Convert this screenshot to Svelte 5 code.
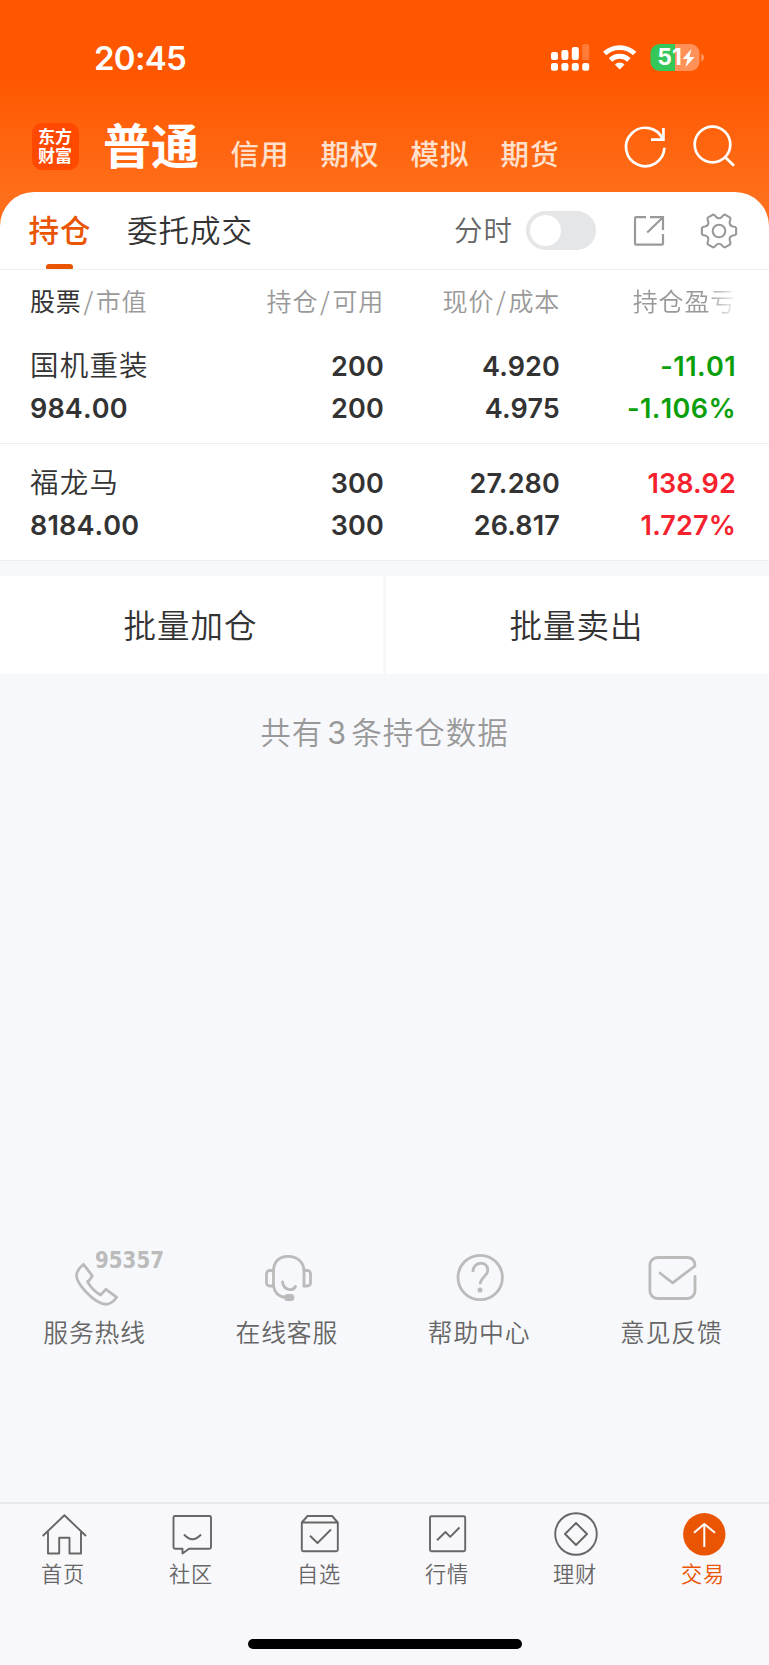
<script>
  const accounts = ['信用', '期权', '模拟', '期货']

  const columns = [
    ['持仓', '可用'],
    ['现价', '成本'],
  ]

  const holdings = [
    { name: '国机重装', value: '984.00', amount: '200', usable: '200', price: '4.920', cost: '4.975', profit: '-11.01', rate: '-1.106%', trend: 'down' },
    { name: '福龙马', value: '8184.00', amount: '300', usable: '300', price: '27.280', cost: '26.817', profit: '138.92', rate: '1.727%', trend: 'up' },
  ]

  const services = [
    { id: 'phone', label: '服务热线' },
    { id: 'headset', label: '在线客服' },
    { id: 'help', label: '帮助中心' },
    { id: 'mail', label: '意见反馈' },
  ]

  const tabs = [
    { id: 'home', label: '首页' },
    { id: 'chat', label: '社区' },
    { id: 'pick', label: '自选' },
    { id: 'chart', label: '行情' },
    { id: 'money', label: '理财' },
    { id: 'trade', label: '交易' },
  ]

  let active = $state('trade')
  let minute = $state(false)

  // six teeth, each with two rounded corners and a shallow valley between
  const point = (deg, r) => {
    const a = (deg * Math.PI) / 180
    return `${(20 + r * Math.cos(a)).toFixed(2)} ${(20 + r * Math.sin(a)).toFixed(2)}`
  }
  const gear =
    [0, 60, 120, 180, 240, 300]
      .map((d, i) => `${i ? 'L' : 'M'}${point(d - 10, 17.4)}L${point(d + 10, 17.4)}Q${point(d + 15, 17)} ${point(d + 18, 14.6)}Q${point(d + 30, 11.2)} ${point(d + 42, 14.6)}Q${point(d + 45, 17)} ${point(d + 50, 17.4)}`)
      .join('') + 'z'
</script>

<div class="screen">
  <header>
    <div class="status">
      <span class="time">20:45</span>
      <svg class="status-icons" width="156" height="32" viewBox="549 42 156 32" fill="#fff">
        <rect x="551" y="63" width="7" height="7.7" rx="2.2" />
        <rect x="561.4" y="63" width="7" height="7.7" rx="2.2" />
        <rect x="571.8" y="63" width="7" height="7.7" rx="2.2" />
        <rect x="582.2" y="63" width="7" height="7.7" rx="2.2" />
        <rect x="551" y="52" width="7" height="8" rx="2.2" />
        <rect x="561.4" y="50" width="7" height="10" rx="2.2" />
        <rect x="571.8" y="47" width="7" height="13" rx="2.2" />
        <rect x="582.2" y="44" width="7" height="16" rx="2.2" opacity=".22" />
        <g fill="none" stroke="#fff" stroke-width="4.8">
          <path d="M604.7 53.6a21.6 21.6 0 0 1 30 0" />
          <path d="M610.5 60a13.2 13.2 0 0 1 18.4 0" />
        </g>
        <path d="M614.8 64.4a7.2 7.2 0 0 1 9.8 0l-4.9 5z" />
        <path d="M659.5 44h15.5v27h-15.5a9 9 0 0 1-9-9v-9a9 9 0 0 1 9-9z" fill="#34c759" />
        <path d="M675 44h15.5a9 9 0 0 1 9 9v9a9 9 0 0 1-9 9H675z" opacity=".35" />
        <path d="M701.3 53.5q2.7 1.2 2.7 4t-2.7 4z" opacity=".4" />
        <text x="657.3" y="65.3" textLength="24.5" lengthAdjust="spacingAndGlyphs">51</text>
        <path d="M691.4 49L682.6 59h4.8l-2 8.300L694.500 57h-5z" />
      </svg>
    </div>
    <div class="nav">
      <div class="logo"><span>东方</span><span>财富</span></div>
      <h1>普通</h1>
      <nav class="accounts">
        {#each accounts as account}
          <span>{account}</span>
        {/each}
      </nav>
      <svg class="refresh" width="44" height="44" viewBox="0 0 44 44" fill="none" stroke="#fff" stroke-width="2.7">
        <path d="M41.4 22.8A19.2 19.2 0 1 1 39.8 14.3" />
        <path d="M40.4 3v11.7H28" />
      </svg>
      <svg class="search" width="44" height="44" viewBox="0 0 44 44" fill="none" stroke="#fff" stroke-width="2.7">
        <circle cx="20.5" cy="19.5" r="17.8" />
        <path d="M33 32l9 8.7" />
      </svg>
    </div>
  </header>

  <main>
    <div class="tools">
      <span class="tool current">持仓</span>
      <span class="tool">委托成交</span>
      <span class="minute">分时</span>
      <button class="switch" class:on={minute} aria-label="分时" onclick={() => (minute = !minute)}><i></i></button>
      <svg class="export" width="36" height="36" viewBox="0 0 36 36" fill="none" stroke="#999" stroke-width="2.2">
        <path d="M15 4.2H5.2a1.2 1.2 0 0 0-1.2 1.2v25a1.2 1.2 0 0 0 1.2 1.2h25.6a1.2 1.2 0 0 0 1.2-1.2V21" />
        <path d="M19 4.2h13V17M31.5 4.7L16.2 19.5" />
      </svg>
      <svg class="gear" width="40" height="40" viewBox="0 0 40 40" fill="none" stroke="#999" stroke-width="2.1" stroke-linejoin="round">
        <path d={gear} />
        <circle cx="20" cy="20" r="6.3" />
      </svg>
    </div>

    <div class="row head">
      <div><b>股票</b><i>/</i>市值</div>
      {#each columns as [first, second]}
        <div>{first}<i>/</i>{second}</div>
      {/each}
      <div><span class="fade">持仓盈亏</span></div>
    </div>
    {#each holdings as item (item.name)}
      <div class="row stock">
        <div class="wide"><p class="name">{item.name}</p><p>{item.value}</p></div>
        <div><p>{item.amount}</p><p>{item.usable}</p></div>
        <div><p>{item.price}</p><p>{item.cost}</p></div>
        <div class={item.trend}><p>{item.profit}</p><p>{item.rate}</p></div>
      </div>
    {/each}
  </main>

  <div class="batch">
    <button>批量加仓</button>
    <button>批量卖出</button>
  </div>
  <p class="count">共有<span>3</span>条持仓数据</p>

  <div class="services">
    {#each services as item (item.id)}
      <div class="service">
        <svg width="150" height="60" viewBox="0 0 150 60" fill="none" stroke="#bbb" stroke-width="2.8" stroke-linecap="round" stroke-linejoin="round">
          {#if item.id === 'phone'}
            <path d="M62.5 15.3L71.3 26.8Q68.5 31.8 66.5 32.6Q71 41 79.5 46Q82 43.5 85 40.3L95.7 48.3Q91.5 54.5 85.5 55.3C73 55 53.5 33 55.8 24.5Q57 20 62.5 15.3z" />
            <text class="hotline" x="74" y="18.6" textLength="69" lengthAdjust="spacingAndGlyphs">95357</text>
          {:else if item.id === 'headset'}
            <path d="M60.5 37V22.5C60.5 13 66 7.3 75 7.3S91 13 91 22.5V37" />
            <path d="M60.5 21.5h-4a3 3 0 0 0-3 3v9.5a3 3 0 0 0 3 3h4M91 21.5h3.5a3 3 0 0 1 3 3v9.5a3 3 0 0 1-3 3H91" />
            <path d="M60.5 37Q62 47.5 73 48.5M69.5 33C70.5 41.5 80 42.5 82.5 37.5" />
            <rect x="72.5" y="46.5" width="7.5" height="4.2" rx="2.1" fill="#bbb" />
          {:else if item.id === 'help'}
            <circle cx="74.2" cy="28.5" r="22.2" />
            <path d="M67 23C66.7 11.5 82.7 11.5 81.7 22C81.2 27.5 74.2 28.5 74.2 35.3" stroke-linecap="butt" />
            <circle cx="74" cy="41" r="2.5" fill="#bbb" stroke="none" />
          {:else}
            <path d="M97 27.5V42a7.5 7.5 0 0 1-7.5 7.5H59.4a7.5 7.5 0 0 1-7.5-7.5V16A7.5 7.5 0 0 1 59.4 8.5h29.5q8 0 8 8.5L74.6 33.8L61.9 24" />
          {/if}
        </svg>
        <span>{item.label}</span>
      </div>
    {/each}
  </div>

  <footer>
    <div class="tabs">
      {#each tabs as tab (tab.id)}
        <button class="tab" class:active={active === tab.id} onclick={() => (active = tab.id)}>
          <svg width="48" height="48" viewBox="0 0 48 48" fill="none" stroke="#666" stroke-width="1.9" stroke-linejoin="round">
            {#if tab.id === 'home'}
              <path d="M2.7 26L24.4 5.3L46 26M8 22v21.5h11.2V27.8H29.5V43.5H41V22" />
            {:else if tab.id === 'chat'}
              <path d="M7 6h34.5a1.5 1.5 0 0 1 1.5 1.5v29.7a1.5 1.5 0 0 1-1.5 1.5H21L14.5 43.5V38.7H7a1.5 1.5 0 0 1-1.5-1.5V7.5A1.5 1.5 0 0 1 7 6z" />
              <path d="M16 24.5Q24.5 34 33 24.5" />
            {:else if tab.id === 'pick'}
              <path d="M5.8 12.5v27.3a1.5 1.5 0 0 0 1.5 1.5h33a1.5 1.5 0 0 0 1.5-1.5V12.5zL11.5 6h24.6l5.7 6.5" />
              <path d="M14 25.8L21.5 33L35 19.5" />
            {:else if tab.id === 'chart'}
              <rect x="6" y="6.2" width="35.2" height="35" rx="1.5" />
              <path d="M13 30.3L21.5 22L26.2 26.8L35.5 17.5" />
            {:else if tab.id === 'money'}
              <circle cx="24" cy="24" r="20.8" />
              <path d="M24 13L35 24L24 35L13 24z" />
            {:else}
              <circle cx="24.3" cy="24.3" r="21.2" fill="#ea5504" stroke="none" />
              <path d="M24.3 37V14M14 22.7L24.3 14L35 22.7" stroke="#fff" stroke-width="2" />
            {/if}
          </svg>
          <span>{tab.label}</span>
        </button>
      {/each}
    </div>
    <div class="home-bar"></div>
  </footer>
</div>

<style>
  :global(body) {
    margin: 0;
  }

  .screen {
    display: flex;
    flex-direction: column;
    width: 769px;
    height: 1665px;
    overflow: hidden;
    background: #f7f8fb;
    color: #333;
    font-family: Inter, 'Noto Sans CJK SC', sans-serif;
    font-weight: 350;
  }

  p,
  h1 {
    margin: 0;
  }

  i {
    font-style: normal;
  }

  button {
    padding: 0;
    border: 0;
    background: none;
    color: inherit;
    font: inherit;
  }

  svg {
    display: block;
    flex: none;
    overflow: visible;
  }

  header {
    height: 234px;
    margin-bottom: -42px;
    background: linear-gradient(#ff5700 75px, #ff6e1a 195px);
    color: #fff;
  }

  .status {
    display: flex;
    justify-content: space-between;
    align-items: center;
    height: 114px;
    padding: 2px 64px 0 94px;
    box-sizing: border-box;
  }

  .time {
    font-size: 33px;
    font-weight: 600;
    line-height: 40px;
    letter-spacing: -.7px;
  }

  .status-icons text {
    font-size: 22.5px;
    font-weight: 700;
  }

  .nav {
    display: flex;
    align-items: center;
    height: 64px;
    padding-left: 31.5px;
    font-family: 'Noto Sans CJK SC', sans-serif;
  }

  .logo {
    display: flex;
    flex-direction: column;
    justify-content: center;
    width: 47px;
    height: 47px;
    padding-bottom: 2px;
    box-sizing: border-box;
    border-radius: 10px;
    background: #ff4800;
    font-size: 17px;
    font-weight: 700;
    line-height: 19.5px;
    text-align: center;
  }

  h1 {
    margin-left: 24.5px;
    font-size: 48px;
    font-weight: 700;
    line-height: 60px;
    margin-top: -6px;
  }

  .accounts {
    display: flex;
    gap: 31px;
    margin: 13px 0 0 31.5px;
    color: #ffe0cd;
    font-size: 28.5px;
    font-weight: 500;
    line-height: 40px;
    letter-spacing: 1px;
  }

  .refresh {
    margin: 2px 0 0 63.5px;
  }

  .search {
    margin: 2px 0 0 25px;
  }

  main {
    border-radius: 34px 34px 0 0;
    background: #fff;
    font-family: 'Noto Sans CJK SC', sans-serif;
  }

  .tools {
    display: flex;
    align-items: center;
    height: 78px;
    padding-left: 28.5px;
    box-sizing: border-box;
    border-bottom: 1px solid #eee;
  }

  .tool {
    position: relative;
    margin: -3px 35.5px 0 0;
    font-size: 30.5px;
    line-height: 74px;
    letter-spacing: 1px;
  }

  .current {
    color: #ea5504;
    font-weight: 500;
  }

  .current::after {
    content: '';
    position: absolute;
    left: 17.5px;
    bottom: -3px;
    width: 27px;
    height: 5px;
    border-radius: 3px 3px 1px 1px;
    background: #ea5504;
  }

  .minute {
    margin: -3px 0 0 165.5px;
    color: #666;
    font-size: 28.5px;
    line-height: 74px;
    letter-spacing: 1px;
  }

  .switch {
    width: 70px;
    height: 39px;
    margin-left: 13px;
    padding: 4px;
    border-radius: 20px;
    background: #e4e6e8;
  }

  .switch i {
    display: block;
    width: 31px;
    height: 31px;
    border-radius: 50%;
    background: #fff;
  }

  .switch.on i {
    margin-left: 31px;
  }

  .export {
    margin-left: 35px;
  }

  .gear {
    margin-left: 32px;
  }

  .row {
    display: grid;
    grid-template-columns: 230px 124px 176px 176px;
    padding-left: 30px;
    text-align: right;
  }

  .row > :first-child {
    text-align: left;
  }

  .head {
    height: 57px;
    color: #999;
    font-size: 25px;
    line-height: 60px;
    letter-spacing: .8px;
    white-space: nowrap;
  }

  .head b {
    color: #333;
    font-weight: 400;
  }

  .head i {
    margin: 0 1.8px;
  }

  .fade {
    mask-image: linear-gradient(90deg, #000 74px, transparent 106px);
  }

  .stock {
    height: 117px;
    padding-top: 19px;
    box-sizing: border-box;
    border-bottom: 1px solid #eee;
    font-family: Inter, sans-serif;
    font-size: 27px;
    font-weight: 600;
    line-height: 42px;
    letter-spacing: .15px;
  }

  .stock .name {
    margin-top: -3px;
    padding-bottom: 3px;
    font-family: 'Noto Sans CJK SC', sans-serif;
    font-size: 28.5px;
    font-weight: 350;
    letter-spacing: 1.2px;
  }

  .wide {
    font-kerning: none;
  }

  .down {
    color: #0a9f0a;
    font-kerning: none;
    letter-spacing: .4px;
  }

  .up {
    color: #f5222d;
  }

  .batch {
    display: flex;
    gap: 3px;
    margin-top: 15px;
  }

  .batch button {
    flex: 1;
    height: 98px;
    padding: 0 2px 3px 0;
    background: #fff;
    font-family: 'Noto Sans CJK SC', sans-serif;
    font-size: 32.5px;
    letter-spacing: 1px;
  }

  .count {
    margin-top: 33px;
    color: #999;
    font-family: 'Noto Sans CJK SC', sans-serif;
    font-size: 30.5px;
    line-height: 48px;
    letter-spacing: 1px;
    text-align: center;
  }

  .count span {
    margin: 0 4px;
    font-family: Inter, sans-serif;
    font-weight: 400;
  }

  .services {
    display: flex;
    margin-top: 492px;
  }

  .service {
    display: flex;
    flex: 1;
    flex-direction: column;
    align-items: center;
  }

  .service span {
    margin: 4px 3px 0 0;
    color: #666;
    font-family: 'Noto Sans CJK SC', sans-serif;
    font-size: 24.8px;
    line-height: 36px;
    letter-spacing: .9px;
  }

  .hotline {
    fill: #bbb;
    stroke: none;
    font-family: 'DejaVu Sans', sans-serif;
    font-size: 23px;
    font-weight: 700;
  }

  footer {
    margin-top: auto;
    height: 163px;
    box-sizing: border-box;
    border-top: 2px solid #e8e9ec;
    background: #f8f8fb;
  }

  .tabs {
    display: flex;
    padding: 6px 1px 0 0;
  }

  .tab {
    display: flex;
    flex: 1;
    flex-direction: column;
    align-items: center;
    color: #666;
  }

  .tab span {
    margin: 0 2px 1px 0;
    font-family: 'Noto Sans CJK SC', sans-serif;
    font-size: 21.2px;
    line-height: 30px;
    letter-spacing: .9px;
  }

  .tab.active {
    color: #ea5504;
  }

  .home-bar {
    width: 274px;
    height: 10px;
    margin: 50px auto 0;
    border-radius: 5px;
    background: #000;
  }
</style>
